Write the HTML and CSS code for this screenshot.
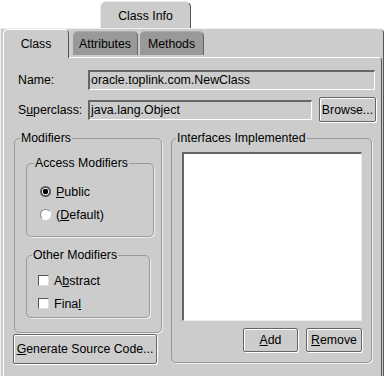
FILE: index.html
```html
<!DOCTYPE html>
<html lang="en">
<head>
    <meta charset="UTF-8">
    <title>Class Info</title>
    <link rel="stylesheet" href="styles.css">
</head>
<body>

<div class="window">
    <!-- outer tab -->
    <div class="top-tabs">
        <div class="top-tab">Class Info</div>
    </div>

    <div class="outer">
        <!-- inner tabs -->
        <div class="inner-tabs">
            <div class="itab active">Class</div>
            <div class="itab">Attributes</div>
            <div class="itab">Methods</div>
        </div>

        <div class="panel">
            <div class="row name-row">
                <span class="label">Name:</span>
                <div class="field">oracle.toplink.com.NewClass</div>
            </div>
            <div class="row super-row">
                <span class="label">S<u>u</u>perclass:</span>
                <div class="field">java.lang.Object</div>
                <button class="btn browse">Browse...</button>
            </div>

            <div class="columns">
                <div class="left-col">
                    <fieldset class="group modifiers">
                        <legend>Modifiers</legend>

                        <fieldset class="group access">
                            <legend>Access Modifiers</legend>
                            <div class="option"><span class="radio checked"></span><span><u>P</u>ublic</span></div>
                            <div class="option"><span class="radio"></span><span>(<u>D</u>efault)</span></div>
                        </fieldset>

                        <fieldset class="group other">
                            <legend>Other Modifiers</legend>
                            <div class="option"><span class="check"></span><span>A<u>b</u>stract</span></div>
                            <div class="option"><span class="check"></span><span>Fina<u>l</u></span></div>
                        </fieldset>
                    </fieldset>
                    <button class="btn generate"><u>G</u>enerate Source Code...</button>
                </div>

                <fieldset class="group interfaces">
                    <legend>Interfaces Implemented</legend>
                    <div class="list"></div>
                    <div class="list-buttons">
                        <button class="btn add"><u>A</u>dd</button>
                        <button class="btn remove"><u>R</u>emove</button>
                    </div>
                </fieldset>
            </div>
        </div>
    </div>
</div>

</body>
</html>
```

FILE: styles.css
```css
body {
    margin: 0;
    background: #ffffff;
    font-family: "Liberation Sans", Arial, sans-serif;
    font-size: 12px;
    color: #000000;
}
.window {
    width: 386px;
    height: 376px;
    overflow: hidden;
}
.top-tabs {
    display: flex;
    padding-left: 100px;
    padding-top: 1px;
}
.top-tab {
    width: 89px;
    height: 25px;
    background: #cccccc;
    border-top: 1px solid #e8e8e8;
    border-left: 1px solid #e8e8e8;
    border-right: 1px solid #555555;
    border-radius: 6px 6px 0 0;
    display: flex;
    align-items: center;
    justify-content: center;
    padding-top: 1px;
    font-size: 12.3px;
}
.outer {
    width: 382px;
    height: 349px;
    background: #cccccc;
    border-top: 1px solid #eeeeee;
    border-left: 1px solid #eeeeee;
    border-right: 1px solid #555555;
    border-radius: 0 5px 0 0;
    box-sizing: content-box;
}
.inner-tabs {
    display: flex;
    align-items: flex-start;
    padding-left: 2px;
    height: 28px;
}
.itab {
    height: 23px;
    margin-top: 2px;
    background: #999999;
    border-top: 1px solid #aaaaaa;
    border-right: 1px solid #666666;
    border-radius: 5px 5px 0 0;
    display: flex;
    align-items: center;
    justify-content: center;
    margin-right: 2px;
    font-size: 12.3px;
}
.itab:nth-child(2) {
    width: 64px;
    margin-left: 2px;
}
.itab:nth-child(3) {
    width: 63px;
}
.itab.active {
    width: 64px;
    height: 28px;
    margin-top: 0;
    background: #cccccc;
    border-top: 1px solid #ffffff;
    border-left: 1px solid #ffffff;
    border-right: 1px solid #555555;
    position: relative;
    z-index: 1;
}
.panel {
    margin-left: 2px;
    height: 315px;
    border-top: 1px solid #ffffff;
    border-left: 1px solid #ffffff;
    border-right: 1px solid #555555;
    border-bottom: 1px solid #555555;
    border-radius: 0 4px 0 0;
    padding: 11px 5px 0 9px;
    box-sizing: content-box;
    width: 363px;
}
.row {
    display: flex;
    align-items: center;
}
.name-row {
    height: 21px;
    margin-right: 1px;
}
.super-row {
    height: 25px;
    margin-top: 7px;
}
.label {
    width: 70px;
    padding-left: 5px;
    font-size: 12.3px;
}
.field {
    flex: 1;
    height: 17px;
    line-height: 17px;
    padding-left: 1px;
    border-top: 2px solid #666666;
    border-left: 2px solid #666666;
    border-bottom: 1px solid #ffffff;
    border-right: 1px solid #ffffff;
    font-size: 12.4px;
}
.btn {
    font-family: "Liberation Sans", Arial, sans-serif;
    font-size: 12.3px;
    color: #000000;
    background: #cccccc;
    border: 1px solid #666666;
    border-radius: 2px;
    box-shadow: inset 1px 1px 0 #ffffff, 1px 1px 0 #ffffff;
    padding: 0;
    white-space: nowrap;
}
.browse {
    width: 57px;
    height: 25px;
    margin-left: 7px;
}
.columns {
    display: flex;
    margin-top: 9px;
}
.left-col {
    width: 150px;
    display: flex;
    flex-direction: column;
}
.group {
    margin: 0;
    border: 1px solid #999999;
    border-radius: 5px;
    box-shadow: 1px 1px 0 #eeeeee;
    min-width: 0;
}
.group legend {
    padding: 0 1px;
    margin-left: -6px;
    font-size: 12.3px;
}
.modifiers {
    margin-left: 1px;
    width: 148px;
    height: 202px;
    box-sizing: border-box;
    padding: 11px 7px 0 11px;
}
.access {
    height: 81px;
    box-sizing: border-box;
    padding: 10px 0 0 13px;
}
.other {
    height: 70px;
    margin-top: 11px;
    margin-right: 4px;
    box-sizing: border-box;
    padding: 7px 0 0 11px;
}
.option {
    display: flex;
    align-items: center;
    height: 23px;
}
.option span:last-child {
    margin-left: 5px;
    font-size: 12.5px;
}
.radio {
    width: 11px;
    height: 11px;
    box-sizing: border-box;
    border-radius: 50%;
    background: #ffffff;
    border: 1px solid #888888;
    border-right-color: #ffffff;
    border-bottom-color: #ffffff;
}
.radio.checked {
    border: 2px solid #555555;
    background: radial-gradient(circle, #000000 0 2.5px, #ffffff 3px);
}
.check {
    width: 11px;
    height: 11px;
    box-sizing: border-box;
    background: #ffffff;
    border-top: 1px solid #555555;
    border-left: 1px solid #555555;
    border-bottom: 1px solid #dddddd;
    border-right: 1px solid #dddddd;
}
.generate {
    width: 144px;
    height: 30px;
    margin-top: 1px;
}
.interfaces {
    margin-left: 8px;
    width: 201px;
    height: 232px;
    box-sizing: border-box;
    padding: 7px 9px 0 10px;
}
.list {
    height: 166px;
    background: #ffffff;
    border-top: 2px solid #666666;
    border-left: 2px solid #666666;
    border-right: 1px solid #eeeeee;
    border-bottom: 1px solid #eeeeee;
}
.list-buttons {
    display: flex;
    justify-content: flex-end;
    gap: 8px;
    margin-top: 7px;
}
.add {
    width: 55px;
    height: 24px;
}
.remove {
    width: 56px;
    height: 24px;
}
```
